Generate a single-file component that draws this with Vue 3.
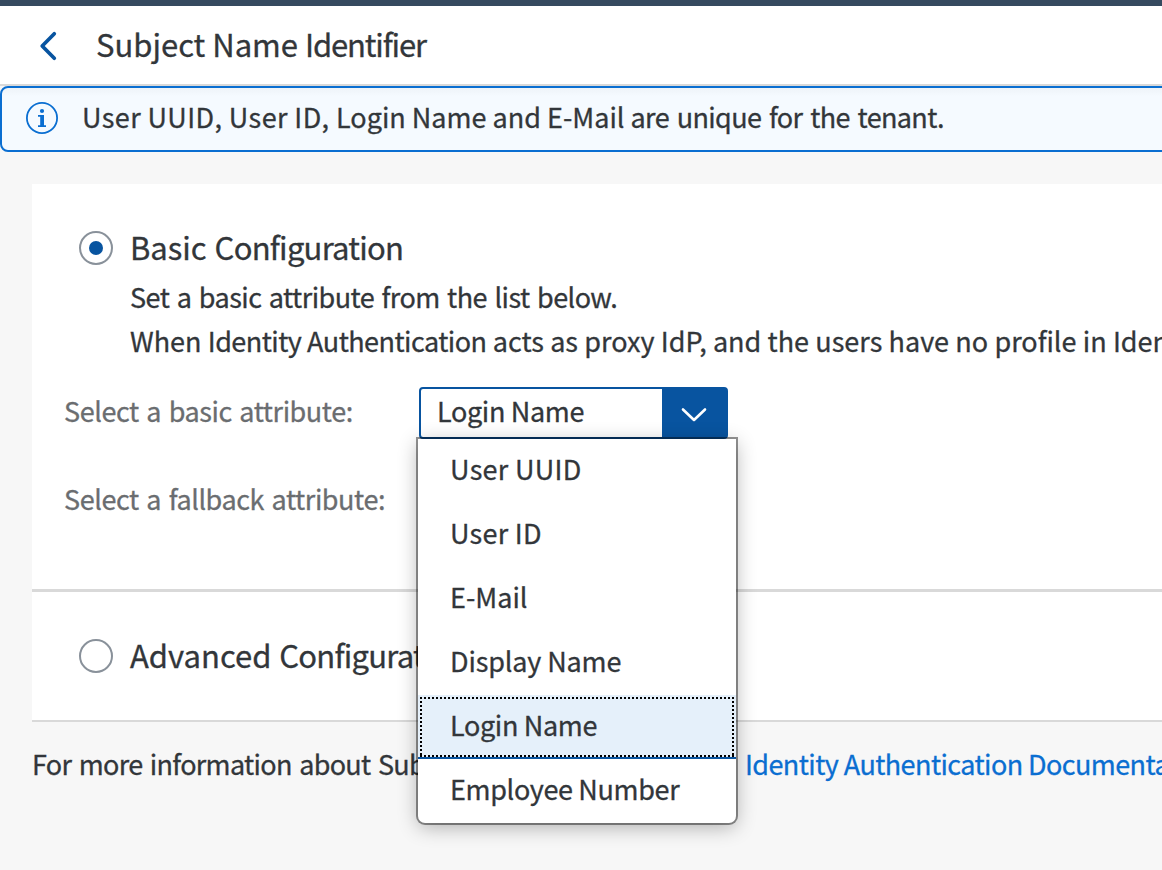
<script setup>
import { ref } from 'vue'

const mode = ref('basic')
const selected = ref('Login Name')
const options = ['User UUID', 'User ID', 'E-Mail', 'Display Name', 'Login Name', 'Employee Number']
</script>

<template>
  <div class="page">
    <header class="header">
      <button class="back" aria-label="Back">
        <svg width="20" height="30" viewBox="0 0 20 30">
          <path d="M15.3 2.7 3.2 15 15.3 27.3" fill="none" stroke="#0854a0" stroke-width="3.7" stroke-linecap="round" stroke-linejoin="round" />
        </svg>
      </button>
      <h1 class="title">Subject Name <span class="tight">Identifier</span></h1>
    </header>

    <div class="strip">
      <svg class="info" width="32" height="32" viewBox="0 0 32 32">
        <circle cx="16" cy="16" r="15.1" fill="none" stroke="#0a6ed1" stroke-width="1.8" />
        <circle cx="16" cy="9" r="2.1" fill="#0a6ed1" />
        <path d="M12 13h6v10.3h2v1.7h-8v-1.7h2.2v-8.6H12z" fill="#0a6ed1" />
      </svg>
      <span class="t"><span class="s1">User UUID, User ID, </span>Login Name and E-Mail <span class="s2">are unique for the tenant.</span></span>
    </div>

    <main class="card">
      <section class="basic">
        <div class="choice" @click="mode = 'basic'">
          <span class="radio"><i v-if="mode === 'basic'" class="dot"></i></span>
          <h2 class="choice-title">Basic <span class="snug">Configuration</span></h2>
        </div>
        <p class="t desc d1">Set a basic attribute from the list below.</p>
        <p class="t desc d2">When <span class="product">Identity Authentication</span> acts as proxy IdP, and the users have no profile in Identity Authentication</p>
        <div class="row">
          <label class="t label">Select a basic attribute:</label>
          <div class="select">
            <span class="t value">{{ selected }}</span>
            <span class="arrow">
              <svg width="28" height="16" viewBox="0 0 28 16">
                <path d="M3 2.5 14 13 25 2.5" fill="none" stroke="#fff" stroke-width="2.6" stroke-linecap="round" stroke-linejoin="round" />
              </svg>
            </span>
            <ul class="menu">
              <li v-for="(o, i) in options" :key="o" class="t item" :class="['i' + i, { active: o === selected }]" @click="selected = o">{{ o }}</li>
            </ul>
          </div>
        </div>
        <div class="row second">
          <label class="t label">Select a fallback attribute:</label>
        </div>
      </section>
      <section class="advanced">
        <div class="choice" @click="mode = 'advanced'">
          <span class="radio"><i v-if="mode === 'advanced'" class="dot"></i></span>
          <h2 class="choice-title">Advanced <span class="snug">Configuration</span></h2>
        </div>
      </section>
    </main>

    <footer class="t footer">
      <span class="lead">For more information about Subject Name Identifier, see</span>
      <a class="link">Identity Authentication Documentation</a>
    </footer>
  </div>
</template>

<style>
html, body { margin: 0; overflow: hidden; }
</style>

<style scoped>
* { box-sizing: border-box; }
.page {
  width: 100%;
  height: 870px;
  overflow: hidden;
  background: #f7f7f7;
  border-top: 6px solid #354a5f;
  color: #32363a;
  font-family: "Noto Sans CJK JP", "Noto Sans", sans-serif;
  white-space: nowrap;
  font-variant-ligatures: none;
  -webkit-text-stroke: 0.3px currentColor;
}
h1, h2, p, ul { margin: 0; padding: 0; font-weight: 400; }
.t { font-size: 27px; line-height: 42px; padding-bottom: 2px; }
.header {
  height: 80px;
  display: flex;
  align-items: center;
  background: #fff;
  border-bottom: 2px solid #d9d9d9;
}
.back { width: 96px; height: 78px; padding: 2px 0 0 39px; border: 0; background: none; text-align: left; display: flex; align-items: center; }
.title { font-size: 31px; line-height: 42px; padding-bottom: 2px; }
.tight { letter-spacing: -1.15px; }
.snug { letter-spacing: -0.76px; margin-left: 1px; }
.strip {
  height: 66px;
  margin-right: -12px;
  display: flex;
  align-items: center;
  padding: 0 0 2px 24px;
  border: 2px solid #0a6ed1;
  border-radius: 8px;
  background: linear-gradient(#eef3f8, #f5faff 8px);
}
.info { margin-right: 24px; flex: none; }
.s1 { letter-spacing: 0.4px; }
.s2 { letter-spacing: -0.65px; word-spacing: 2.4px; }
.card { margin: 32px 0 0 32px; background: #fff; border-bottom: 2px solid #d9d9d9; height: 538px; }
.basic { height: 408px; padding-top: 42px; border-bottom: 3px solid #d9d9d9; }
.choice { display: flex; align-items: center; padding-left: 47px; height: 44px; }
.radio {
  width: 34px; height: 34px; border: 2px solid #89919a; border-radius: 50%;
  display: flex; align-items: center; justify-content: center; flex: none;
}
.dot { width: 14px; height: 14px; border-radius: 50%; background: #0854a0; }
.choice-title { font-size: 31px; line-height: 42px; padding-bottom: 2px; margin-left: 17px; }
.desc { padding-left: 98px; }
.d1 { margin-top: 6px; letter-spacing: -0.56px; word-spacing: 2px; }
.d2 { word-spacing: 0.2px; }
.product { letter-spacing: -0.54px; }
.row { display: flex; align-items: center; height: 52px; padding-left: 32px; margin-top: 23px; }
.second { margin-top: 36px; }
.label { width: 355px; color: #6a6d70; flex: none; letter-spacing: -0.44px; word-spacing: 2px; padding-bottom: 4px; }
.select {
  position: relative; width: 309px; height: 52px; display: flex; align-items: center;
  border: 2px solid #0854a0; border-radius: 4px; background: #fff;
}
.value { flex: 1; padding: 0 0 4px 16px; letter-spacing: -0.35px; }
.arrow { width: 64px; height: 48px; background: #0854a0; display: flex; align-items: center; justify-content: center; padding-top: 3px; }
.menu {
  position: absolute; z-index: 5; left: -3px; top: 50px; width: 318px; list-style: none;
  background: #fff; border-radius: 0 0 7px 7px;
  box-shadow: 0 0 0 2px rgba(0, 0, 0, 0.42), 0 4px 20px rgba(0, 0, 0, 0.3);
}
.item { position: relative; height: 64px; line-height: 60px; padding: 0 0 0 32px; }
.i0 { letter-spacing: 0.3px; }
.i1 { letter-spacing: 0.25px; }
.i3 { letter-spacing: -0.15px; }
.i4, .i5 { letter-spacing: -0.35px; }
.active { background: #e5f0fa; border-bottom: 2px solid #0854a0; }
.active::after {
  content: ""; position: absolute; left: 2px; top: 2px; right: 2px; bottom: 0;
  background:
    repeating-linear-gradient(90deg, #000 0 2px, transparent 2px 4px) 0 0 / 100% 2px no-repeat,
    repeating-linear-gradient(90deg, #000 0 2px, transparent 2px 4px) 0 100% / 100% 2px no-repeat,
    repeating-linear-gradient(180deg, #000 0 2px, transparent 2px 4px) 0 0 / 2px 100% no-repeat,
    repeating-linear-gradient(180deg, #000 0 2px, transparent 2px 4px) 100% 0 / 2px 100% no-repeat;
}
.advanced { padding-top: 42px; }
.footer { display: flex; padding-left: 32px; margin-top: 21px; }
.lead { width: 713px; flex: none; overflow: hidden; letter-spacing: -0.68px; word-spacing: 2px; }
.link { color: #0a6ed1; letter-spacing: -0.58px; }
</style>
